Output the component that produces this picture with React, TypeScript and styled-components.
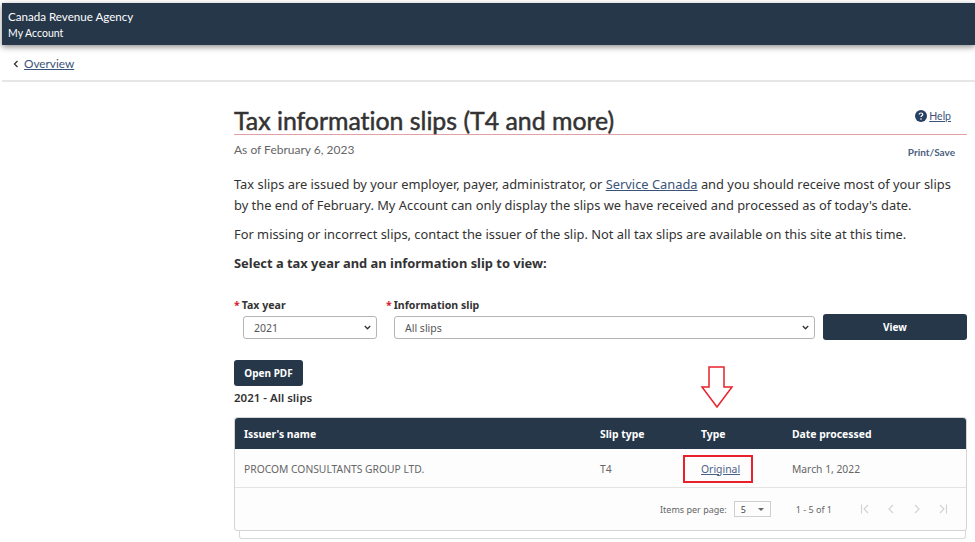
import { createGlobalStyle, styled } from "styled-components";

const GlobalStyle = createGlobalStyle`
  html, body {
    margin: 0;
    padding: 0;
    background: #fff;
    overflow: hidden;
  }
  body {
    font-family: "Noto Sans", "Open Sans", sans-serif;
    color: #333;
  }
  * {
    box-sizing: border-box;
  }
`;

const Page = styled.div`
  width: 975px;
  height: 542px;
  padding-top: 3px;
  overflow: hidden;
`;
const Header = styled.header`
  height: 42px;
  margin-left: 2px;
  padding: 5px 0 0 6px;
  background: #26374a;
  color: #fff;
  font-family: Lato, sans-serif;
  box-shadow: 0 2px 6px rgba(0, 0, 0, 0.45);
`;
const Agency = styled.div`
  font-size: 11.6px;
  line-height: 17px;
`;
const AccountName = styled.div`
  font-size: 10.5px;
  line-height: 16px;
`;
const SubNav = styled.nav`
  height: 37px;
  margin-left: 2px;
  padding: 11px 0 0 11px;
  display: flex;
  align-items: flex-start;
  gap: 5px;
  border-bottom: 2px solid #e6e6e6;
  font-family: Lato, sans-serif;
  font-size: 11.8px;
  line-height: 16px;
`;
const BackIcon = styled.svg`
  width: 6px;
  height: 8px;
  margin-top: 4px;
`;
const Link = styled.a`
  color: #3b5378;
  text-decoration: underline;
`;
const Main = styled.main`
  padding: 23px 8px 0 234px;
`;
const TitleRow = styled.div`
  height: 30px;
  display: flex;
  justify-content: space-between;
  align-items: flex-start;
  border-bottom: 1px solid #e2a0a4;
`;
const Title = styled.h1`
  margin: 0;
  font-family: Lato, sans-serif;
  font-size: 24.85px;
  line-height: 30px;
  font-weight: 400;
  color: #333;
  white-space: nowrap;
  font-variant-ligatures: none;
  -webkit-text-stroke: 0.5px #333;
`;
const Help = styled.div`
  display: flex;
  align-items: center;
  gap: 2px;
  margin: 4px 16px 0 0;
  font-family: Lato, sans-serif;
  font-size: 10.5px;
  line-height: 14px;
`;
const HelpIcon = styled.svg`
  width: 12px;
  height: 12px;
`;
const MetaRow = styled.div`
  display: flex;
  justify-content: space-between;
  align-items: flex-start;
  height: 39px;
  padding: 7px 12px 0 0;
`;
const AsOf = styled.span`
  font-family: Lato, sans-serif;
  font-size: 12px;
  line-height: 16px;
  color: #666;
`;
const PrintSave = styled.span`
  margin-top: 3px;
  font-family: Lato, sans-serif;
  font-size: 10px;
  line-height: 14px;
  font-weight: 700;
  color: #4a5f80;
`;
const Paragraph = styled.p`
  margin: 0 0 8px;
  font-size: 12.86px;
  line-height: 21px;
  color: #333;
  white-space: nowrap;
`;
const Instruction = styled.p`
  margin: 0;
  font-size: 12.9px;
  line-height: 21px;
  font-weight: 700;
  color: #333;
`;
const FilterRow = styled.div`
  display: flex;
  align-items: flex-end;
  margin-top: 22px;
`;
const Field = styled.div<{ $width: number; $gap: number }>`
  width: ${(p) => p.$width}px;
  margin-right: ${(p) => p.$gap}px;
`;
const FieldLabel = styled.label`
  display: block;
  height: 20px;
  padding-top: 1px;
  font-size: 10.6px;
  line-height: 16px;
  font-weight: 700;
  color: #333;
`;
const Required = styled.span`
  color: #d3212c;
  margin-right: 2px;
`;
const Select = styled.div<{ $indent: number }>`
  height: 23px;
  margin-left: ${(p) => p.$indent}px;
  padding: 0 5px 0 10px;
  display: flex;
  align-items: center;
  justify-content: space-between;
  background: #fff;
  border: 1px solid #b5b5b5;
  border-radius: 3px;
  font-size: 10.5px;
  color: #555;
`;
const Chevron = styled.svg`
  width: 7px;
  height: 5px;
`;
const ViewButton = styled.button`
  width: 144px;
  height: 26px;
  margin-bottom: -1px;
  border: 0;
  border-radius: 3px;
  background: #26374a;
  color: #fff;
  font-family: inherit;
  font-size: 10px;
  font-weight: 700;
`;
const PdfButton = styled.button`
  display: block;
  width: 69px;
  height: 26px;
  margin-top: 21px;
  padding: 0;
  border: 0;
  border-radius: 3px;
  background: #26374a;
  color: #fff;
  font-family: inherit;
  font-size: 10px;
  font-weight: 700;
`;
const ResultTitle = styled.h2`
  margin: 4px 0 0;
  font-size: 11.5px;
  line-height: 16px;
  font-weight: 600;
  color: #333;
`;
const ArrowMark = styled.svg`
  position: absolute;
  left: 700px;
  top: 365px;
  width: 34px;
  height: 44px;
`;
const Card = styled.section`
  position: relative;
  margin-top: 11px;
  border: 1px solid #d4d4d4;
  border-radius: 3px;
  background: #fdfdfd;
  &::after {
    content: "";
    position: absolute;
    left: 4px;
    right: 0;
    bottom: -9px;
    height: 8px;
    border: 1px solid #d9d9d9;
    border-top: 0;
    border-radius: 0 0 3px 3px;
  }
`;
const TableRow = styled.div<{ $head?: boolean }>`
  display: grid;
  grid-template-columns: 356px 101px 91px 1fr;
  align-items: center;
  height: ${(p) => (p.$head ? 31 : 38)}px;
  padding-left: 9px;
  background: ${(p) => (p.$head ? "#26374a" : "transparent")};
  color: ${(p) => (p.$head ? "#fff" : "#666")};
  font-size: ${(p) => (p.$head ? 10.4 : 10.3)}px;
  font-weight: ${(p) => (p.$head ? 700 : 400)};
  border-bottom: ${(p) => (p.$head ? "0" : "1px solid #e4e4e4")};
  margin-bottom: ${(p) => (p.$head ? 1 : 0)}px;
  border-radius: ${(p) => (p.$head ? "3px 3px 0 0" : "0")};
`;
const TypeCell = styled.span`
  position: relative;
  display: block;
`;
const TypeLink = styled(Link)`
  color: #4a6288;
  font-size: 10.4px;
`;
const Highlight = styled.span`
  position: absolute;
  left: -18px;
  top: -7px;
  width: 70px;
  height: 28px;
  border: 2px solid #e8212d;
`;
const Paginator = styled.div`
  height: 42px;
  display: flex;
  align-items: center;
  justify-content: flex-end;
  padding-right: 18px;
  font-size: 9px;
  color: #666;
`;
const PageSize = styled.div`
  width: 37px;
  height: 16px;
  margin: 0 25px 0 7px;
  padding: 0 6px;
  display: flex;
  align-items: center;
  justify-content: space-between;
  border: 1px solid #cfcfcf;
  color: #444;
`;
const Caret = styled.span`
  width: 0;
  height: 0;
  border-left: 3px solid transparent;
  border-right: 3px solid transparent;
  border-top: 3px solid #666;
`;
const Pager = styled.div`
  display: flex;
  gap: 16px;
  margin-left: 28px;
`;
const PagerIcon = styled.svg`
  width: 10px;
  height: 10px;
  fill: none;
  stroke: #d2d2d2;
  stroke-width: 1.1;
`;

export default function App() {
  return (
    <>
      <GlobalStyle />
      <Page>
        <Header>
          <Agency>Canada Revenue Agency</Agency>
          <AccountName>My Account</AccountName>
        </Header>
        <SubNav>
          <BackIcon viewBox="0 0 6 8">
            <path d="M4.5 1 1.5 4l3 3" fill="none" stroke="#333" strokeWidth="1.3" />
          </BackIcon>
          <Link>Overview</Link>
        </SubNav>
        <Main>
          <TitleRow>
            <Title>Tax information slips (T4 and more)</Title>
            <Help>
              <HelpIcon viewBox="0 0 12 12">
                <circle cx="6" cy="6" r="6" fill="#284162" />
                <path
                  d="M4.2 4.6c0-1 .8-1.6 1.8-1.6s1.8.6 1.8 1.5c0 1.3-1.8 1.3-1.8 2.6"
                  fill="none"
                  stroke="#fff"
                  strokeWidth="1.2"
                />
                <circle cx="6" cy="9" r=".8" fill="#fff" />
              </HelpIcon>
              <Link>Help</Link>
            </Help>
          </TitleRow>
          <MetaRow>
            <AsOf>As of February 6, 2023</AsOf>
            <PrintSave>Print/Save</PrintSave>
          </MetaRow>
          <Paragraph>
            Tax slips are issued by your employer, payer, administrator, or <Link>Service Canada</Link> and you should receive most of your slips
            <br />
            by the end of February. My Account can only display the slips we have received and processed as of today's date.
          </Paragraph>
          <Paragraph>
            For missing or incorrect slips, contact the issuer of the slip. Not all tax slips are available on this site at this time.
          </Paragraph>
          <Instruction>Select a tax year and an information slip to view:</Instruction>
          <FilterRow>
            <Field $width={143} $gap={9}>
              <FieldLabel>
                <Required>*</Required>Tax year
              </FieldLabel>
              <Select $indent={9}>
                2021
                <Chevron viewBox="0 0 7 5">
                  <path d="M.8 1 3.5 3.8 6.2 1" fill="none" stroke="#333" strokeWidth="1.3" />
                </Chevron>
              </Select>
            </Field>
            <Field $width={429} $gap={8}>
              <FieldLabel>
                <Required>*</Required>Information slip
              </FieldLabel>
              <Select $indent={8}>
                All slips
                <Chevron viewBox="0 0 7 5">
                  <path d="M.8 1 3.5 3.8 6.2 1" fill="none" stroke="#333" strokeWidth="1.3" />
                </Chevron>
              </Select>
            </Field>
            <ViewButton>View</ViewButton>
          </FilterRow>
          <PdfButton>Open PDF</PdfButton>
          <ResultTitle>2021 - All slips</ResultTitle>
          <ArrowMark viewBox="0 0 34 44">
            <path
              d="M9 2H24V22H32L17 42 2 22H9Z"
              fill="#fff"
              stroke="#e8212d"
              strokeWidth="1.5"
            />
          </ArrowMark>
          <Card>
            <TableRow $head>
              <span>Issuer's name</span>
              <span>Slip type</span>
              <span>Type</span>
              <span>Date processed</span>
            </TableRow>
            <TableRow>
              <span>PROCOM CONSULTANTS GROUP LTD.</span>
              <span>T4</span>
              <TypeCell>
                <TypeLink>Original</TypeLink>
                <Highlight />
              </TypeCell>
              <span>March 1, 2022</span>
            </TableRow>
            <Paginator>
              Items per page:
              <PageSize>
                5<Caret />
              </PageSize>
              1 - 5 of 1
              <Pager>
                <PagerIcon viewBox="0 0 10 10">
                  <path d="M1.5 0.5v9M8 1 4 5l4 4" />
                </PagerIcon>
                <PagerIcon viewBox="0 0 10 10">
                  <path d="M7 1 3 5l4 4" />
                </PagerIcon>
                <PagerIcon viewBox="0 0 10 10">
                  <path d="M3 1l4 4-4 4" />
                </PagerIcon>
                <PagerIcon viewBox="0 0 10 10">
                  <path d="M8.5 0.5v9M2 1l4 4-4 4" />
                </PagerIcon>
              </Pager>
            </Paginator>
          </Card>
        </Main>
      </Page>
    </>
  );
}
